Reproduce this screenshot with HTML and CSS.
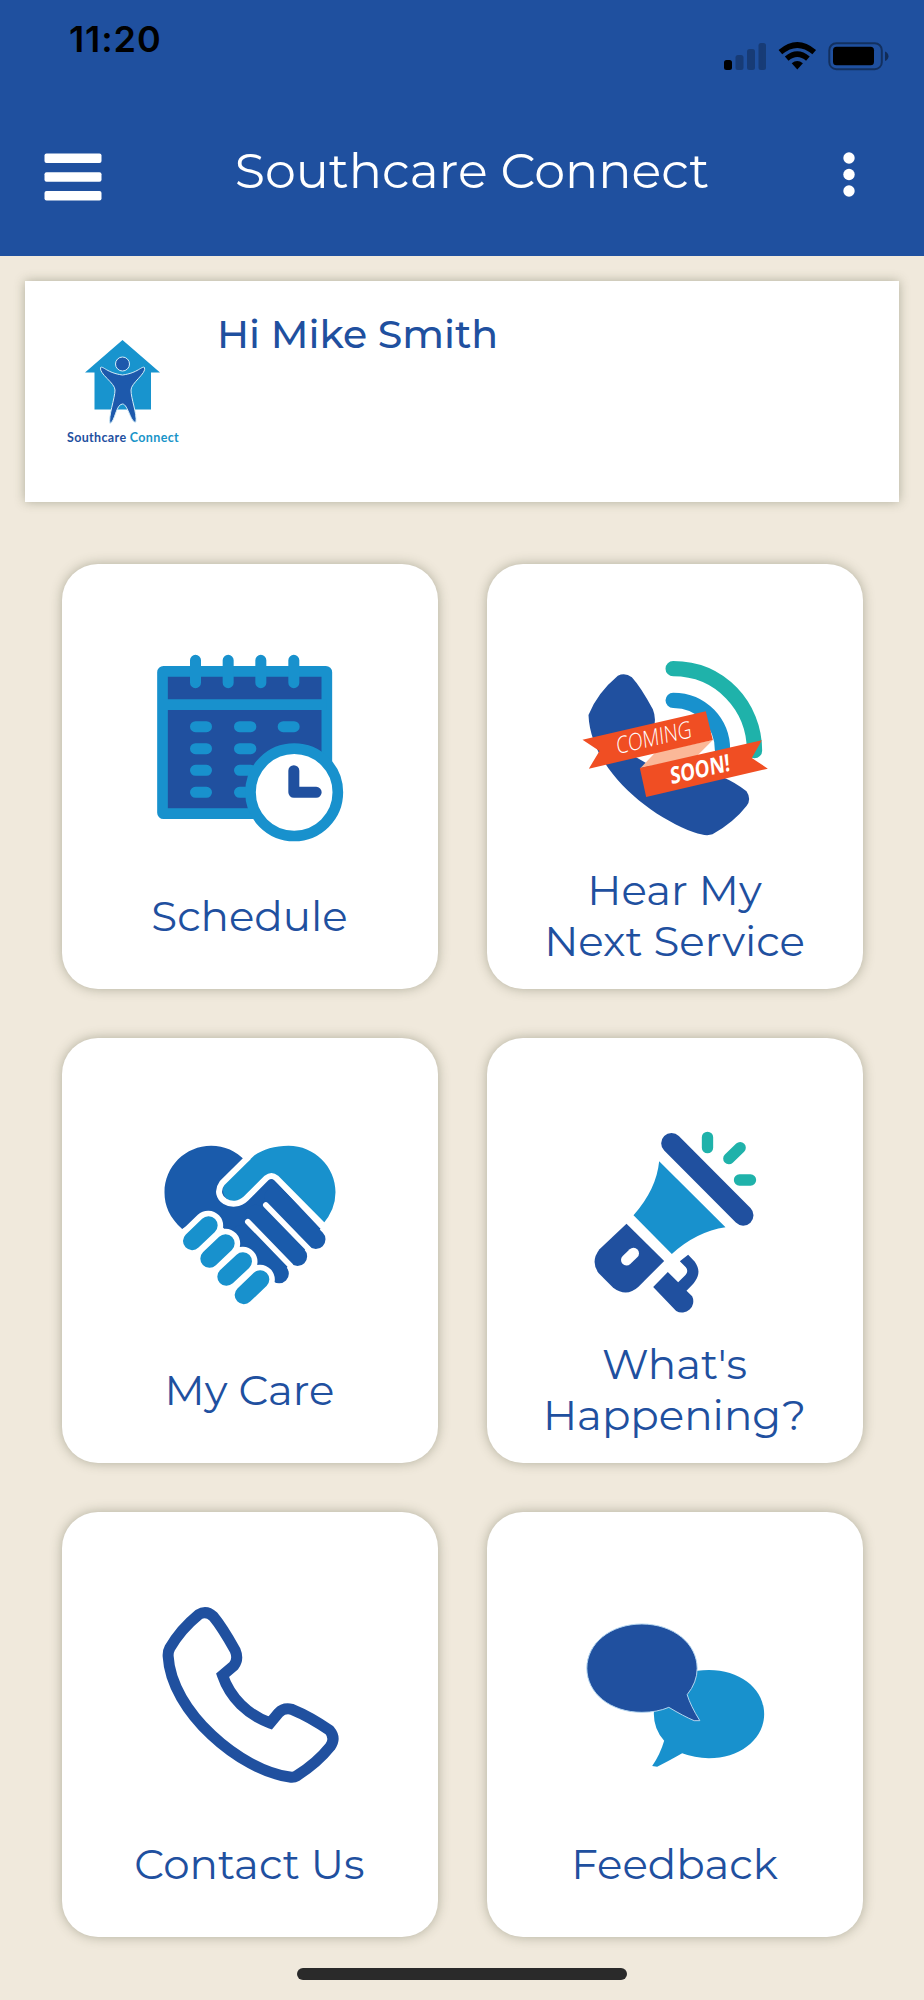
FILE: index.html
```html
<!DOCTYPE html>
<html lang="en">
<head>
<meta charset="utf-8">
<title>Southcare Connect</title>
<link rel="stylesheet" href="styles.css">
</head>
<body>
<header class="header">
  <div class="status">
    <span class="time">11:20</span>
    <svg class="status-icons" viewBox="0 0 168 32">
      <rect x="0" y="19" width="8" height="10" rx="2.5"/>
      <g opacity=".25"><rect x="11.5" y="14" width="8" height="15" rx="2.5"/><rect x="23" y="8" width="8" height="21" rx="2.5"/><rect x="34.500" y="2" width="7.500" height="27" rx="2.500"/></g>
      <g fill="none" stroke="#000" stroke-width="5.600"><path d="M56.400 11.200Q73.300-3.200 90.200 11.200"/><path d="M62.700 17.600Q73.300 8.500 83.900 17.600"/></g>
      <path d="M67.700 22.300Q73.300 17.500 78.900 22.300L73.300 28.600Z"/>
      <rect x="105.300" y="2.200" width="52.500" height="26" rx="7" fill="none" stroke="#000" stroke-opacity=".4" stroke-width="2"/>
      <rect x="109" y="5.700" width="41" height="18.500" rx="3.500"/>
      <path d="M161 10.500Q164.500 12 164.500 15.200T161 20Z" opacity=".45"/>
    </svg>
  </div>
  <div class="appbar">
    <svg class="menu" viewBox="0 0 58 50" fill="#fff"><rect x="0.500" y="0.500" width="57" height="9.500" rx="2"/><rect x="0.500" y="19.200" width="57" height="9.500" rx="2"/><rect x="0.500" y="37.900" width="57" height="9.500" rx="2"/></svg>
    <h1 class="title">Southcare Connect</h1>
    <svg class="more" viewBox="0 0 14 48" fill="#fff"><circle cx="7" cy="7" r="5.700"/><circle cx="7" cy="23.500" r="5.700"/><circle cx="7" cy="40" r="5.700"/></svg>
  </div>
</header>
<section class="welcome">
  <div class="logo">
    <svg class="logo-mark" viewBox="0 0 76 88">
      <path fill="#1894ce" d="M37.500 0L75 32.500H66V69.500H9.500V32.500H0Z"/>
      <g fill="#1d59ac" stroke="#d5eef8" stroke-width="1">
        <circle cx="37.500" cy="24" r="7"/>
        <path d="M15.500 27.500C18 25.500 22 33 37.500 35C53 33 57 25.500 59.500 27.500C62 33 46 43 46 50C46 59 52 73 51 82C46 84 43 64 37.500 64C31 64 30 82 25 83.500C23 77 30 58 30 50C30 43 14 34 15.500 27.500Z"/>
      </g>
    </svg>
    <div class="brand">Southcare <span>Connect</span></div>
  </div>
  <h2 class="greeting">Hi Mike Smith</h2>
</section>
<main class="grid">
  <a class="card">
    <svg class="icon" viewBox="0 0 376 290"><g transform="translate(68.500 66) scale(.33333)">
      <rect x="96" y="124" width="493" height="427" rx="3" fill="#20509f" stroke="#1891cd" stroke-width="32"/>
      <path d="M96 224H589" stroke="#1891cd" stroke-width="32"/>
      <g stroke="#1891cd" stroke-width="33" stroke-linecap="round"><path d="M195 91V158M293 91V158M391 91V158M490 91V158M195 290H228M327 290H361M458 290H491M195 356H228M327 356H361M195 421H228M327 421H361M195 487H228M327 487H361"/></g>
      <circle cx="491" cy="487" r="131" fill="#fff" stroke="#1891cd" stroke-width="32"/>
      <path d="M490 422V487H557" fill="none" stroke="#20509f" stroke-width="33" stroke-linecap="round" stroke-linejoin="round"/>
    </g></svg>
    <div class="label">Schedule</div>
  </a>
  <a class="card">
    <svg class="icon" viewBox="0 0 376 290"><g transform="translate(73.500 76) scale(.33333)">
      <path fill="#20509f" d="M172 107Q194 96 214 112Q240 140 277 208Q288 235 280 262L215 345L380 440L486 411Q526 428 558 454Q574 478 558 498Q520 547 456 583Q436 590 400 577C260 525 90 385 84 225Q109 160 172 107Z"/>
      <g fill="none" stroke-width="46" stroke-linecap="round"><path stroke="#1fb2aa" d="M338 86C480 86 582 200 582 332"/><path stroke="#1891cd" d="M338 181C425 181 486 250 486 330"/></g>
      <path fill="#fff" d="M268 347L405 310L408 345L350 370Z"/>
      <path fill="#fbb898" d="M240 384L285 337L457 300L407 350Z"/>
      <path fill="#f04e23" d="M66 299L436 214L457 300L85 386L117 333ZM238 384L604 301L574 354L622 386L257 471Z"/>
      <g fill="#fff"><text class="ribbon-thin" transform="translate(170 343) rotate(-13) skewX(-7)" textLength="231" lengthAdjust="spacingAndGlyphs">COMING</text>
      <text class="ribbon-bold" transform="translate(332 433) rotate(-13) skewX(-7)" textLength="183" lengthAdjust="spacingAndGlyphs">SOON!</text></g>
    </g></svg>
    <div class="label">Hear My<br>Next Service</div>
  </a>
  <a class="card">
    <svg class="icon" viewBox="0 0 376 290"><g transform="translate(78.500 82) scale(.33333)">
      <path fill="#1a5bab" d="M125 327C87 293 72 258 72 217C72 139 135 77 212 77C252 77 287 93 314 122L400 178L540 326L505 378L450 430L403 487L340 425L205 275Z"/>
      <path stroke="#1a5bab" stroke-width="58" stroke-linecap="round" d="M400 232L526 358M345 283L471 409M300 345L416 461"/>
      <path fill="#1891cd" d="M546 314L407 169Q393 156 378 169L312 232C278 264 230 230 254 189L342 106C366 88 404 77 444 77C522 77 585 140 585 217Q585 270 546 314Z"/>
      <path fill="none" stroke="#fff" stroke-width="18" d="M556 324L407 174Q393 162 378 174L316 236C278 273 211 236 245 189L324 111"/>
      <g stroke="#fff" stroke-width="17" stroke-linecap="round"><path d="M376 255L505 388M322 305L450 437"/></g>
      <g stroke="#fff" stroke-width="90" stroke-linecap="round"><path d="M155 363L203 317M207 416L254 371M258 470L306 425M310 525L358 479"/></g>
      <g stroke="#1891cd" stroke-width="55" stroke-linecap="round"><path d="M155 363L204 316M207 416L255 370M258 470L307 424M310 525L359 478"/></g>
    </g></svg>
    <div class="label">My Care</div>
  </a>
  <a class="card">
    <svg class="icon" viewBox="0 0 376 290"><g transform="translate(83.500 72) scale(.33333)">
      <path d="M303 100L518 316" stroke="#20509f" stroke-width="62" stroke-linecap="round"/>
      <path fill="#1891cd" d="M266 154L465 352Q378 365 304 432L189 316Q258 238 266 154Z"/>
      <path fill="#20509f" d="M168 341L281 453L204 530Q168 563 128 533L84 489Q59 454 87 418Z"/>
      <path d="M168 450L189 430" stroke="#fff" stroke-width="33" stroke-linecap="round"/>
      <path fill="#20509f" d="M292 486L323 517L345 495Q355 483 346 472L328 454L353 434L373 455C394 486 384 510 348 542L365 559A34 34 0 0 1 317 603L248 531Z"/>
      <g stroke="#1fb2aa" stroke-width="34" stroke-linecap="round"><path d="M411 82V113M475 146L509 113M507 210H540"/></g>
    </g></svg>
    <div class="label">What's<br>Happening?</div>
  </a>
  <a class="card">
    <svg class="icon" viewBox="0 0 376 290"><g transform="translate(78.500 67) scale(.33333)">
      <path fill="none" stroke="#20509f" stroke-width="33" d="M88 207Q120 151 174 107Q197 93 218 112Q244 143 284 214Q295 240 280 260L246 289C269 357 322 408 389 432L414 402Q430 385 454 391Q510 414 567 454Q587 478 569 503Q530 552 468 591Q460 596 448 594C300 575 92 398 83 232Q82 218 88 207Z"/>
    </g></svg>
    <div class="label">Contact Us</div>
  </a>
  <a class="card">
    <svg class="icon" viewBox="0 0 376 290"><g transform="translate(73.500 87) scale(.33333)">
      <path fill="#1891cd" d="M445 213C540 213 611 270 611 345C611 420 540 478 445 478Q402 477 365 463Q318 490 290 503L275 501Q299 466 311 425Q280 391 280 345C280 270 350 213 445 213Z"/>
      <path fill="#20509f" stroke="#b4d5ef" stroke-width="3" d="M244 75C340 75 410 135 410 208Q410 250 380 287Q390 320 418 365L401 365Q370 352 325 325Q290 340 244 340C150 340 79 283 79 208C79 133 150 75 244 75Z"/>
    </g></svg>
    <div class="label">Feedback</div>
  </a>
</main>
<div class="home-indicator"></div>
</body>
</html>
```
FILE: styles.css
```css
* { box-sizing: border-box; }
body {
  margin: 0;
  height: 2000px;
  overflow: hidden;
  background: #f0e9dc;
  color: #1f509f;
  font-family: Montserrat, Inter, sans-serif;
}
h1, h2 { margin: 0; }
.header { height: 256px; background: #1f509f; }
.status { display: flex; justify-content: space-between; height: 120px; padding: 17px 32px 0 69px; color: #000; }
.time { font: 600 36px/44px Inter, sans-serif; letter-spacing: .9px; }
.status-icons { width: 168px; height: 32px; margin-top: 24px; }
.appbar { display: flex; justify-content: space-between; padding: 0 68px 0 44px; color: #fff; }
.menu { width: 58px; height: 50px; margin-top: 33px; }
.title { font-size: 49.2px; font-weight: 400; line-height: 60px; margin-top: 20px; }
.more { width: 14px; height: 48px; margin-top: 31px; }
.welcome {
  display: flex;
  height: 221px;
  margin: 25px 25px 0;
  background: #fff;
  box-shadow: 0 0 10px rgba(70, 75, 50, .38);
}
.logo { display: flex; flex-direction: column; align-items: center; width: 196px; padding-top: 59px; }
.logo-mark { width: 76px; height: 88px; }
.brand { font: 700 12.500px/16px Lato, sans-serif; letter-spacing: .35px; margin-top: 2px; white-space: nowrap; }
.brand span { color: #1894c8; }
.greeting { font-size: 39.500px; font-weight: 500; line-height: 48px; margin: 29px 0 0 -4px; }
.grid {
  display: grid;
  grid-template-columns: 376px 376px;
  grid-auto-rows: 425px;
  gap: 49px;
  padding: 62px 61px 0 61.500px;
}
.card {
  display: flex;
  flex-direction: column;
  border-radius: 36px;
  background: #fff;
  box-shadow: 0 0 12px rgba(70, 75, 50, .38);
}
.icon { width: 376px; height: 290px; }
.label {
  display: flex;
  align-items: center;
  justify-content: center;
  height: 124px;
  font-size: 42px;
  line-height: 51px;
  text-align: center;
}
.ribbon-thin { font: 300 70px "Open Sans", sans-serif; }
.ribbon-bold { font: 700 70px "Open Sans", sans-serif; }
.home-indicator { width: 330px; height: 12px; margin: 31px auto 0; border-radius: 6px; background: #2a2a2a; }
```
